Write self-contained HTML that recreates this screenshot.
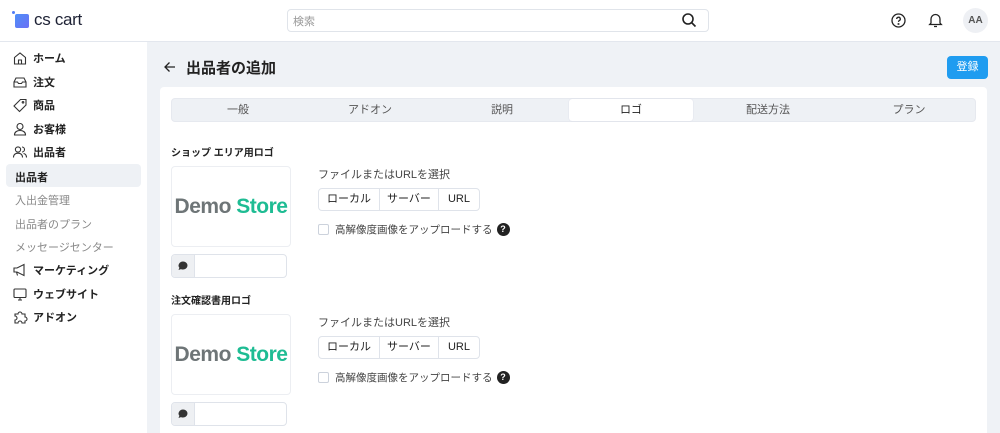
<!DOCTYPE html>
<html><head><meta charset="utf-8"><style>
*{box-sizing:border-box;margin:0;padding:0}
html{width:1000px;height:433px;overflow:hidden;background:#eff2f6}
body{width:1000px;height:433px;overflow:hidden;font-family:"Liberation Sans","Noto Sans CJK JP",sans-serif;background:#eff2f6;position:relative;color:#222}
.abs{position:absolute}
.hdr{left:0;top:0;width:1000px;height:42px;background:#fff;border-bottom:1px solid #e3e7ee}
.side{left:0;top:42px;width:147px;height:391px;background:#fff}
.nav{position:absolute;left:12px;font-size:11px;font-weight:bold;color:#222;display:flex;align-items:center}
.nav svg{width:16px;height:16px;margin-right:5px}
.sub{position:absolute;left:15px;font-size:11px;color:#888}
.card{left:160px;top:87px;width:827px;height:360px;background:#fff;border-radius:4px}
.tabs{left:171px;top:98px;width:805px;height:24px;background:#eef1f5;border-radius:4px;border:1px solid #e6e9ef}
.tab{position:absolute;top:0;height:22px;line-height:22px;text-align:center;font-size:11px;color:#555}
.lbl{font-size:10px;font-weight:bold;color:#222}
.logo{width:120px;height:81px;border:1px solid #eceef2;border-radius:4px;background:#fff;font-weight:bold;font-size:21px;text-align:center;line-height:79px;letter-spacing:-0.5px;white-space:nowrap}
.inp{width:116px;height:24px;border:1px solid #dfe3ea;border-radius:4px;background:#fff;overflow:hidden}
.inp div{width:23px;height:22px;background:#eef0f3;border-right:1px solid #dfe3ea;display:flex;align-items:center;justify-content:center}
.small{font-size:11px;color:#444}
.btns{display:flex;border:1px solid #dfe3ea;border-radius:4px;height:23px;font-size:11px;color:#222}
.btns span{line-height:21px;text-align:center;border-right:1px solid #dfe3ea}
.btns span:last-child{border-right:none}
.chk{display:flex;align-items:center;font-size:10.5px;color:#444;white-space:nowrap}
.chk i{width:11px;height:11px;border:1px solid #ccd2dc;border-radius:2px;margin-right:6px}
.q{width:13px;height:13px;border-radius:50%;background:#222;color:#fff;font-size:9px;font-weight:bold;text-align:center;line-height:13px;margin-left:4px}
</style></head><body>
<div class="abs hdr">
 <div class="abs" style="left:12px;top:11px;width:3px;height:3px;border-radius:50%;background:#4f7cf7"></div>
 <div class="abs" style="left:15px;top:14px;width:14px;height:14px;border-radius:2px;background:linear-gradient(135deg,#4e8ff8,#6b6ff5)"></div>
 <div class="abs" style="left:34px;top:10px;font-size:17px;color:#1e2235;letter-spacing:-0.3px">cs cart</div>
 <div class="abs" style="left:287px;top:9px;width:422px;height:23px;border:1px solid #e0e4ea;border-radius:4px;font-size:11px;color:#999;padding:3px 5px">検索</div>
 <svg class="abs" style="left:681px;top:12px" width="16" height="16" viewBox="0 0 16 16" fill="none" stroke="#222" stroke-width="1.6"><circle cx="7" cy="7" r="5"/><path d="M11 11l3.5 3.5"/></svg>
 <svg class="abs" style="left:890px;top:12px" width="17" height="17" viewBox="0 0 17 17" fill="none" stroke="#222" stroke-width="1.3"><circle cx="8.5" cy="8.5" r="6.5"/><path d="M6.7 7a1.8 1.8 0 1 1 2.6 1.6c-.6.3-.8.7-.8 1.3"/><circle cx="8.5" cy="12" r=".4"/></svg>
 <svg class="abs" style="left:927px;top:11px" width="17" height="18" viewBox="0 0 17 18" fill="none" stroke="#222" stroke-width="1.3"><path d="M4 12V8a4.5 4.5 0 0 1 9 0v4l1.3 1.5H2.7z M7 15.5h3"/></svg>
 <div class="abs" style="left:963px;top:8px;width:25px;height:25px;border-radius:50%;background:#eef0f4;font-size:10px;font-weight:bold;color:#555;text-align:center;line-height:25px">AA</div>
</div>
<div class="abs side">
 <div class="nav" style="top:8px"><svg viewBox="0 0 16 16" fill="none" stroke="#333" stroke-width="1.1"><path d="M2.5 7.5L8 3l5.5 4.5V14h-11z M6.5 14v-4h3v4"/></svg>ホーム</div>
 <div class="nav" style="top:32px"><svg viewBox="0 0 16 16" fill="none" stroke="#333" stroke-width="1.1"><path d="M2 8l2-4h8l2 4v5H2z M2 8h3.5l1 1.5h3l1-1.5H14"/></svg>注文</div>
 <div class="nav" style="top:55px"><svg viewBox="0 0 16 16" fill="none" stroke="#333" stroke-width="1.1"><path d="M8.5 2.5H14v5.5l-6.5 6.5-5.5-5.5z"/><circle cx="11" cy="5.3" r=".8"/></svg>商品</div>
 <div class="nav" style="top:79px"><svg viewBox="0 0 16 16" fill="none" stroke="#333" stroke-width="1.1"><circle cx="8" cy="5.5" r="3"/><path d="M2.5 14c0-3 2.5-4.5 5.5-4.5s5.5 1.5 5.5 4.5z"/></svg>お客様</div>
 <div class="nav" style="top:102px"><svg viewBox="0 0 16 16" fill="none" stroke="#333" stroke-width="1.1"><circle cx="6" cy="5.5" r="2.6"/><path d="M1.5 13.5c0-3 2-4.3 4.5-4.3s4.5 1.3 4.5 4.3 M10 3a2.5 2.5 0 0 1 0 5 M11.5 9.5c2 .4 3 1.7 3 4"/></svg>出品者</div>
 <div class="abs" style="left:6px;top:122px;width:135px;height:23px;background:#eef1f5;border-radius:4px;font-size:11px;font-weight:bold;padding:5px 9px">出品者</div>
 <div class="sub" style="top:150px">入出金管理</div>
 <div class="sub" style="top:174px">出品者のプラン</div>
 <div class="sub" style="top:197px">メッセージセンター</div>
 <div class="nav" style="top:220px"><svg viewBox="0 0 16 16" fill="none" stroke="#333" stroke-width="1.1"><path d="M2 6h3l7-3.5v11L5 10H2z M4.5 10l1 3.5"/></svg>マーケティング</div>
 <div class="nav" style="top:244px"><svg viewBox="0 0 16 16" fill="none" stroke="#333" stroke-width="1.1"><rect x="2" y="3" width="12" height="8.5" rx="1"/><path d="M6 14h4 M8 11.5V14"/></svg>ウェブサイト</div>
 <div class="nav" style="top:267px"><svg viewBox="0 0 16 16" fill="none" stroke="#333" stroke-width="1.1"><path d="M3 5h3a2 2 0 1 1 4 0h3v3a2 2 0 1 1 0 4v2h-3a2 2 0 1 0-4 0H3v-3a2 2 0 1 0 0-4z"/></svg>アドオン</div>
</div>
<svg class="abs" style="left:163px;top:60px" width="14" height="14" viewBox="0 0 14 14" fill="none" stroke="#222" stroke-width="1.3"><path d="M12 7H2 M6.5 2.5L2 7l4.5 4.5"/></svg>
<div class="abs" style="left:186px;top:57px;font-size:15px;font-weight:bold;color:#222">出品者の追加</div>
<div class="abs" style="left:947px;top:56px;width:41px;height:23px;background:#1f9cf0;border-radius:4px;color:#fff;font-size:11px;text-align:center;line-height:23px">登録</div>
<div class="abs card"></div>
<div class="abs tabs">
 <div class="tab" style="left:0;width:132px">一般</div>
 <div class="tab" style="left:132px;width:132px">アドオン</div>
 <div class="tab" style="left:264px;width:132px">説明</div>
 <div class="tab" style="left:397px;width:124px;background:#fff;border-radius:3px;color:#222;box-shadow:0 0 1px #ccd">ロゴ</div>
 <div class="tab" style="left:521px;width:150px">配送方法</div>
 <div class="tab" style="left:671px;width:132px">プラン</div>
</div>

<div class="abs lbl" style="left:171px;top:144px">ショップ エリア用ロゴ</div>
<div class="abs logo" style="left:171px;top:166px"><span style="color:#6e7577">Demo</span> <span style="color:#1ebc93">Store</span></div>
<div class="abs inp" style="left:171px;top:254px"><div><svg width="12" height="12" viewBox="0 0 12 12"><path d="M6 1.5a4.5 4 0 1 1-2 7.6L1.5 10l.9-2.2A4.5 4 0 0 1 6 1.5z" fill="#333"/></svg></div></div>
<div class="abs small" style="left:318px;top:166px">ファイルまたはURLを選択</div>
<div class="abs btns" style="left:318px;top:188px"><span style="width:61px">ローカル</span><span style="width:59px">サーバー</span><span style="width:40px">URL</span></div>
<div class="abs chk" style="left:318px;top:222px"><i></i>高解像度画像をアップロードする<div class="q">?</div></div>

<div class="abs lbl" style="left:171px;top:292px">注文確認書用ロゴ</div>
<div class="abs logo" style="left:171px;top:314px"><span style="color:#6e7577">Demo</span> <span style="color:#1ebc93">Store</span></div>
<div class="abs inp" style="left:171px;top:402px"><div><svg width="12" height="12" viewBox="0 0 12 12"><path d="M6 1.5a4.5 4 0 1 1-2 7.6L1.5 10l.9-2.2A4.5 4 0 0 1 6 1.5z" fill="#333"/></svg></div></div>
<div class="abs small" style="left:318px;top:314px">ファイルまたはURLを選択</div>
<div class="abs btns" style="left:318px;top:336px"><span style="width:61px">ローカル</span><span style="width:59px">サーバー</span><span style="width:40px">URL</span></div>
<div class="abs chk" style="left:318px;top:370px"><i></i>高解像度画像をアップロードする<div class="q">?</div></div>
</body></html>
